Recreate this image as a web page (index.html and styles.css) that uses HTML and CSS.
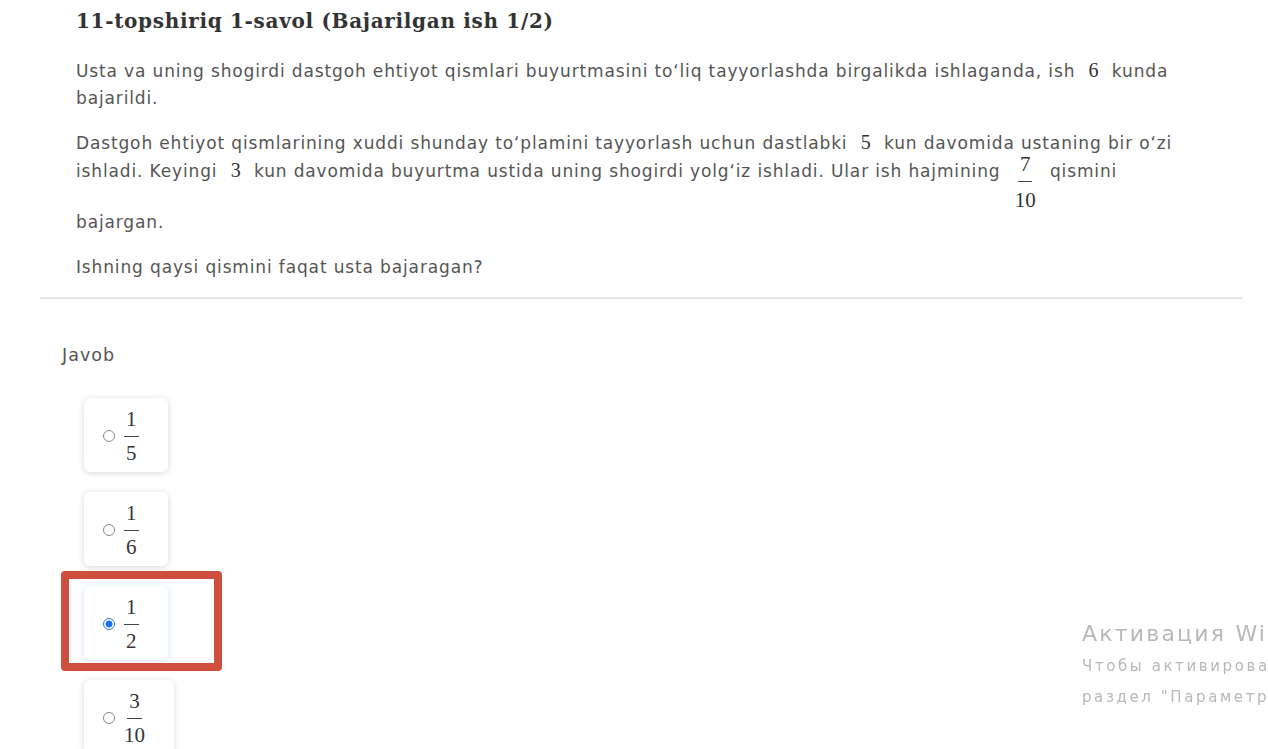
FILE: index.html
```html
<!DOCTYPE html>
<html lang="uz">
<head>
<meta charset="utf-8">
<title>11-topshiriq 1-savol</title>
<link rel="stylesheet" href="styles.css">
</head>
<body>
<main class="page">
  <h1 class="title">11-topshiriq 1-savol (Bajarilgan ish 1/2)</h1>
  <div class="question">
    <p>Usta va uning shogirdi dastgoh ehtiyot qismlari buyurtmasini to‘liq tayyorlashda birgalikda ishlaganda, ish <span class="m">6</span> kunda bajarildi.</p>
    <p>Dastgoh ehtiyot qismlarining xuddi shunday to‘plamini tayyorlash uchun dastlabki <span class="m">5</span> kun davomida ustaning bir o‘zi ishladi. Keyingi <span class="m">3</span> kun davomida buyurtma ustida uning shogirdi yolg‘iz ishladi. Ular ish hajmining <span class="frac inline"><span class="num">7</span><span class="den">10</span></span> qismini bajargan.</p>
    <p>Ishning qaysi qismini faqat usta bajaragan?</p>
  </div>
  <hr class="divider">
  <section class="answer">
    <div class="answer-label">Javob</div>
    <div class="options">
      <label class="option">
        <span class="radio"></span>
        <span class="frac"><span class="num">1</span><span class="den">5</span></span>
      </label>
      <label class="option">
        <span class="radio"></span>
        <span class="frac"><span class="num">1</span><span class="den">6</span></span>
      </label>
      <label class="option selected">
        <span class="radio checked"></span>
        <span class="frac"><span class="num">1</span><span class="den">2</span></span>
        <span class="highlight"></span>
      </label>
      <label class="option">
        <span class="radio"></span>
        <span class="frac"><span class="num">3</span><span class="den">10</span></span>
      </label>
    </div>
  </section>
</main>
<div class="watermark">
  <div class="wm-title">Активация Windows</div>
  <div class="wm-line">Чтобы активировать Windows, перейдите в</div>
  <div class="wm-line">раздел "Параметры".</div>
</div>
</body>
</html>
```

FILE: styles.css
```css
html, body {
  margin: 0;
  padding: 0;
  background: #fff;
  overflow: hidden;
  height: 749px;
}

.page {
  padding: 9px 26px 0 40px;
  font-family: "DejaVu Sans", "Noto Sans", sans-serif;
  color: #555;
}

.title {
  margin: 0 0 0 36px;
  font-family: "DejaVu Serif", "Liberation Serif", serif;
  font-weight: bold;
  font-size: 20px;
  letter-spacing: 0.68px;
  line-height: 24px;
  color: #333;
}

.question {
  margin: 24px 0 0 36px;
  width: 1114px;
  font-size: 17px;
  letter-spacing: 0.86px;
  line-height: 27px;
}

.question p {
  margin: 0 0 17px 0;
}

.question p:last-child {
  margin-top: 18px;
  margin-bottom: 16px;
}

.m {
  font-family: "Liberation Serif", "DejaVu Serif", serif;
  font-size: 20px;
  letter-spacing: 0;
  margin: 0 7px;
  color: #333;
}

.frac {
  display: inline-flex;
  flex-direction: column;
  align-items: center;
  font-family: "Liberation Serif", "DejaVu Serif", serif;
  font-size: 21px;
  letter-spacing: 0;
  line-height: 24px;
  color: #333;
}

.frac .num {
  padding: 0 2px 5px;
  border-bottom: 1.5px solid #444;
}

.frac .den {
  padding-top: 4px;
}

.frac.inline {
  vertical-align: 6px;
  margin: 0 8px;
}

.frac.inline .num {
  line-height: 14px;
  padding-bottom: 10px;
}

.frac.inline .den {
  line-height: 18px;
  padding-top: 9px;
}

.divider {
  margin: 0;
  border: 0;
  border-top: 2px solid #e6e6e6;
  width: 1202px;
}

.answer {
  padding: 44px 0 0 22px;
}

.answer-label {
  font-size: 17.5px;
  letter-spacing: 1px;
  line-height: 24px;
  color: #555;
}

.options {
  display: flex;
  flex-direction: column;
  align-items: flex-start;
  gap: 20px;
  margin: 31px 0 0 22px;
}

.option {
  position: relative;
  display: flex;
  align-items: center;
  gap: 9px;
  padding: 9px 29px 7px 19px;
  background: #fff;
  border-radius: 6px;
  box-shadow: 0 1px 6px rgba(0, 0, 0, 0.16);
}

.option.selected {
  box-shadow: 0 1px 6px rgba(80, 150, 240, 0.28);
}

.radio {
  width: 12px;
  height: 12px;
  border: 1px solid #8a8a8a;
  border-radius: 50%;
  box-sizing: border-box;
  flex: none;
}

.radio.checked {
  border: 1.5px solid #2a7de1;
  background: radial-gradient(circle, #1a73e8 0 3.2px, #fff 3.8px);
}

.highlight {
  position: absolute;
  left: -23px;
  top: -15px;
  width: 161px;
  height: 100px;
  box-sizing: border-box;
  border: 8px solid #cf4f3f;
  border-radius: 4px;
  pointer-events: none;
}

.watermark {
  position: fixed;
  left: 1082px;
  top: 617px;
  white-space: nowrap;
  font-family: "DejaVu Sans", "Noto Sans", sans-serif;
  color: #b8b8b8;
}

.wm-title {
  font-size: 22px;
  letter-spacing: 2.2px;
  line-height: 34px;
}

.wm-line {
  font-size: 15px;
  letter-spacing: 2.6px;
  line-height: 31px;
}
```
